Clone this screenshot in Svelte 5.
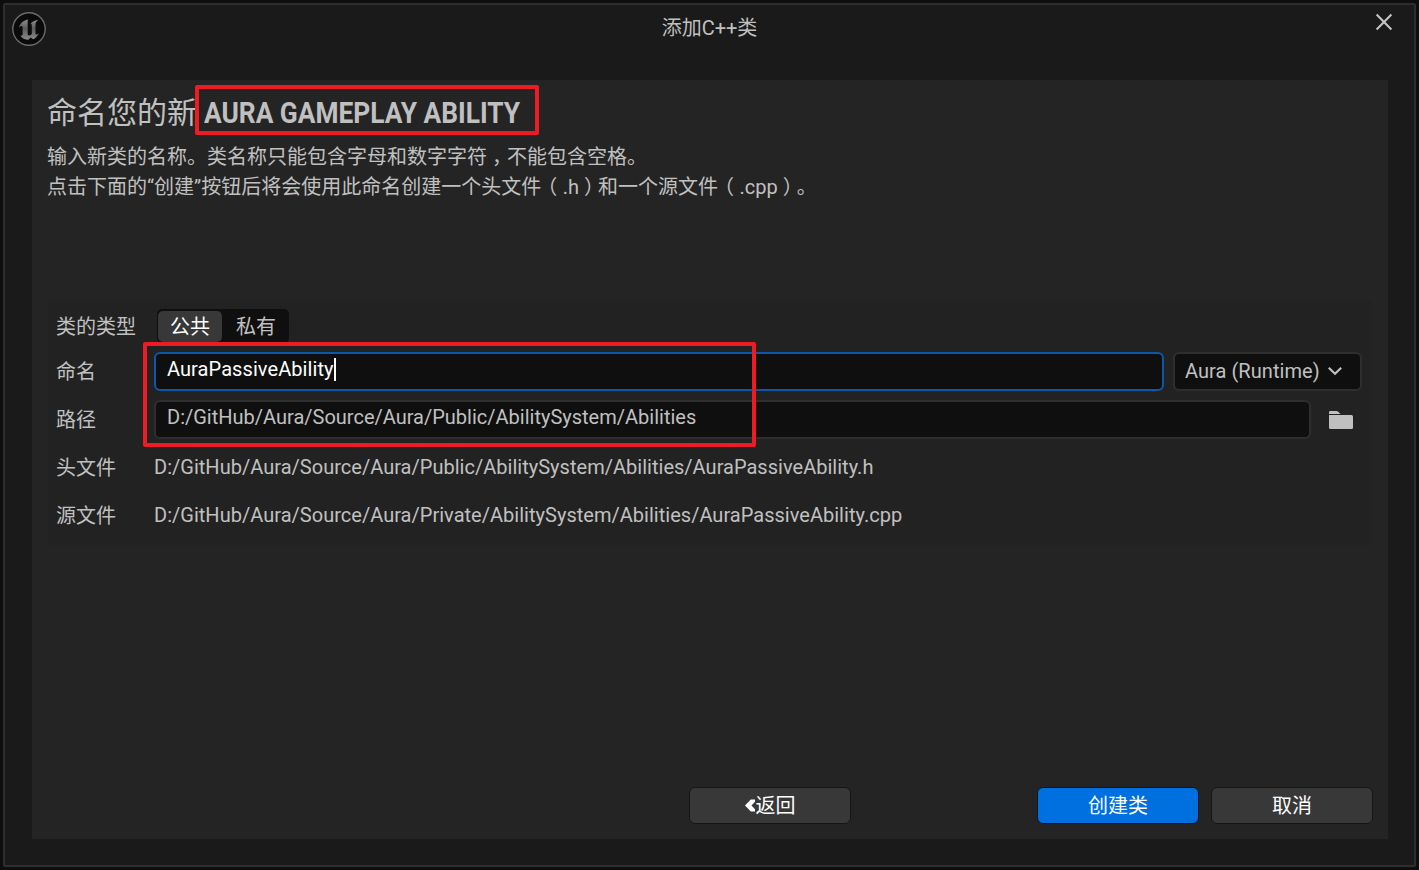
<script>
  let name = $state('AuraPassiveAbility');
  const path = 'D:/GitHub/Aura/Source/Aura/Public/AbilitySystem/Abilities';
  const header = $derived(`${path}/${name}.h`);
  const source = $derived(`${path.replace('Public', 'Private')}/${name}.cpp`);
</script>

<div class="desktop">
  <div class="window">
    <header class="titlebar">
      <svg class="logo" width="36" height="36" viewBox="0 0 36 36">
        <defs>
          <linearGradient id="metal" x1="0" y1="0" x2="0" y2="1">
            <stop offset="0" stop-color="#8c8c8c" />
            <stop offset=".45" stop-color="#5c5c5c" />
            <stop offset="1" stop-color="#8a8a8a" />
          </linearGradient>
        </defs>
        <circle cx="18" cy="18" r="16.2" fill="#0a0a0a" stroke="#6b6b6b" stroke-width="1.4" />
        <path
          fill="url(#metal)"
          d="M16.800 8.500C12 9.500 8.800 12.600 7.900 17c1.200-1.500 2.100-2 2.800-1.900.7.100.9.600.9 1.400v6.800c0 1-.5 1.400-1.400 1.400-.4 0-.8-.1-1.200-.3 2 2.800 5 4.200 8.400 4.300l2.300-2.200 2.400 1.800c3-1.500 4.900-3.800 5.800-6.400-1.300 1.200-2 1.600-2.700 1.500-.5-.1-.7-.5-.7-1.100v-8.800c0-1.800 1-3.300 2.800-4.800-2.900.4-5.600 1.700-7.700 3.700l.5.400c.5.500.7 1.100.7 1.900v8.300c-.8.900-1.700 1.400-2.600 1.400-1 0-1.500-.6-1.500-1.600v-11.200c0-1.200-.1-2.100.3-3.100z"
        />
      </svg>
      <div class="title">添加C++类</div>
      <svg class="close" width="20" height="20" viewBox="0 0 20 20">
        <path d="M2.600 2.600 17.400 17.400M17.400 2.600 2.600 17.400" stroke="#c4c4c4" stroke-width="2.100" fill="none" />
      </svg>
    </header>

    <main class="panel">
      <h1>命名您的新<span class="parent">AURA GAMEPLAY ABILITY</span></h1>
      <p>输入新类的名称。类名称只能包含字母和数字字符<span class="half">，</span>不能包含空格。</p>
      <p>点击下面的“创建”按钮后将会使用此命名创建一个头文件<span class="half open">（</span>.h<span class="half shut">）</span>和一个源文件<span class="half open">（</span>.cpp<span class="half shut">）</span>。</p>

      <section class="form">
        <div class="row first">
          <span class="label">类的类型</span>
          <div class="segments">
            <span class="segment active">公共</span>
            <span class="segment second">私有</span>
          </div>
        </div>
        <div class="row">
          <span class="label">命名</span>
          <div class="field focused">{name}<i class="caret"></i></div>
          <div class="select">
            <span>Aura (Runtime)</span>
            <svg width="16" height="10" viewBox="0 0 16 10">
              <path d="M1.800 1.800 8 7.800 14.200 1.800" fill="none" stroke="#c0c0c0" stroke-width="2.200" />
            </svg>
          </div>
        </div>
        <div class="row">
          <span class="label">路径</span>
          <div class="field">{path}</div>
          <svg class="folder" width="24" height="18" viewBox="0 0 24 18">
            <path d="M0 3V1.200Q0 0 1.200 0H7.500Q8.500 0 9.300.8L11.500 3Z" fill="#c0c0c0" />
            <path d="M0 4H22.500Q24 4 24 5.500V16.500Q24 18 22.500 18H1.500Q0 18 0 16.500Z" fill="#c0c0c0" />
          </svg>
        </div>
        <div class="row">
          <span class="label">头文件</span>
          <span class="value">{header}</span>
        </div>
        <div class="row">
          <span class="label">源文件</span>
          <span class="value">{source}</span>
        </div>
      </section>

      <footer>
        <div class="button back">
          <svg width="11" height="13" viewBox="0 0 11 13">
            <path d="M5.800.5H10V2.800L6.500 6.500 10 10.200V12.500H5.800L0 6.500Z" fill="#fff" />
          </svg>返回
        </div>
        <div class="button primary">创建类</div>
        <div class="button">取消</div>
      </footer>
    </main>
  </div>
  <div class="mark heading-mark"></div>
  <div class="mark field-mark"></div>
</div>

<style>
  :global(body) {
    background: #0f0f0f;
  }
  .desktop {
    position: relative;
    box-sizing: border-box;
    width: 1419px;
    height: 870px;
    padding: 3px;
    background: #0e0e0e;
    overflow: hidden;
    color: #c0c0c0;
    font-family: Roboto, 'Noto Sans CJK SC', sans-serif;
    font-size: 20px;
    font-weight: 400;
    line-height: 30px;
    white-space: nowrap;
  }
  .window {
    box-sizing: border-box;
    height: 864px;
    border: 2px solid #2e2e2e;
    border-radius: 2px;
    background: #1a1a1a;
    padding: 0 26px 0 27px;
  }
  .titlebar {
    display: flex;
    height: 75px;
    margin: 0 -6px 0 -21px;
  }
  .logo {
    margin-top: 6px;
  }
  .title {
    margin: 8px auto 0;
    padding-right: 2px;
  }
  .close {
    margin: 7px 0 0;
  }
  .panel {
    box-sizing: border-box;
    display: flex;
    flex-direction: column;
    width: 1356px;
    height: 759px;
    padding: 10px 15px 15px 16px;
    background: #242424;
  }
  h1 {
    margin: 0 0 7px -1px;
    height: 45px;
    font-size: 30px;
    line-height: 45px;
    font-weight: 400;
  }
  .parent {
    display: inline-block;
    margin-left: 7px;
    font-weight: 700;
    transform: scaleX(0.877);
    transform-origin: 0 50%;
  }
  p {
    margin: 0 0 0 -1px;
    height: 30px;
  }
  .half {
    padding: 0 5px;
    font-feature-settings: 'halt';
  }
  .open {
    padding: 0 5.500px 0 6px;
  }
  .shut {
    padding: 0 4px 0 5px;
  }
  .form {
    margin-top: 98px;
    width: 1324px;
    height: 245px;
    background: #222222;
  }
  .row {
    display: flex;
    align-items: center;
    height: 48px;
    padding-left: 8px;
  }
  .row.first {
    box-sizing: border-box;
    height: 47px;
    padding-top: 5px;
  }
  .label {
    width: 98px;
    padding-top: 2px;
  }
  .segments {
    box-sizing: border-box;
    display: flex;
    width: 132px;
    height: 34px;
    margin-left: 3px;
    padding: 2px 1px 1px;
    border-radius: 5px;
    background: #0f0f0f;
  }
  .segment {
    width: 64px;
    height: 31px;
    line-height: 32px;
    text-align: center;
    border-radius: 5px;
  }
  .segment.active {
    background: #383838;
    color: #fff;
  }
  .segment.second {
    margin-left: 2px;
  }
  .field {
    box-sizing: border-box;
    display: flex;
    width: 1157px;
    height: 39px;
    padding-left: 11px;
    border: 2px solid #2e2e2e;
    border-radius: 6px;
    background: #0f0f0f;
    line-height: 30px;
  }
  .field.focused {
    width: 1010px;
    border-color: #0b57ab;
    color: #fff;
    letter-spacing: 0.08px;
  }
  .caret {
    width: 2px;
    height: 23px;
    margin: 4px 0 0;
    background: #fff;
  }
  .value {
    letter-spacing: 0.02px;
  }
  .select {
    box-sizing: border-box;
    display: flex;
    align-items: center;
    gap: 7px;
    width: 189px;
    height: 39px;
    margin-left: 9px;
    padding-left: 10px;
    border: 2px solid #2e2e2e;
    border-radius: 6px;
    background: #0f0f0f;
    letter-spacing: 0.05px;
  }
  .folder {
    margin: 1px 0 0 18px;
  }
  footer {
    display: flex;
    margin-top: auto;
    padding-left: 641px;
  }
  .button {
    box-sizing: border-box;
    display: flex;
    align-items: center;
    justify-content: center;
    width: 162px;
    height: 37px;
    border: 1px solid #151515;
    border-radius: 6px;
    background: #383838;
    color: #fff;
  }
  .back {
    margin-right: 186px;
  }
  .back svg {
    margin-top: -1px;
  }
  .primary {
    margin-right: 12px;
    background: #0070e0;
  }
  .mark {
    position: absolute;
    box-sizing: border-box;
    border: 4px solid #ed1c24;
    border-radius: 2px;
  }
  .heading-mark {
    left: 195px;
    top: 85px;
    width: 344px;
    height: 50px;
  }
  .field-mark {
    left: 143px;
    top: 342px;
    width: 613px;
    height: 105px;
  }
</style>
